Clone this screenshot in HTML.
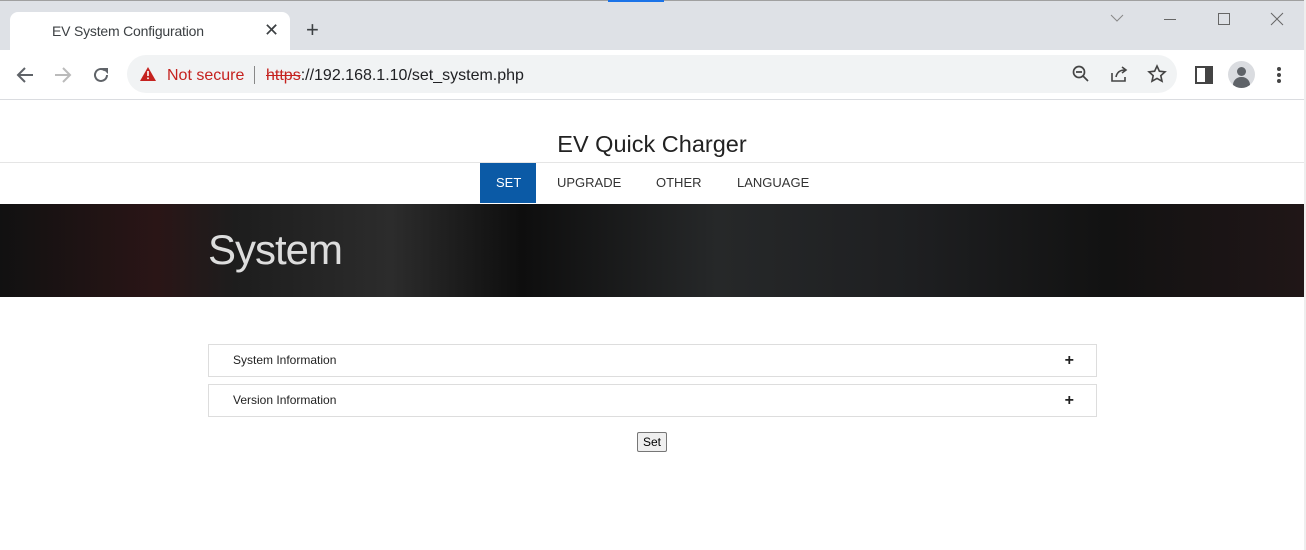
<!DOCTYPE html>
<html><head><style>
*{margin:0;padding:0;box-sizing:border-box}
body{width:1306px;height:550px;overflow:hidden;background:#fff;font-family:"Liberation Sans",sans-serif;position:relative}
.tabbar{position:absolute;left:0;top:0;width:1304px;height:50px;background:#dee1e6;border-top:1px solid #a0a0a0}
.tab{position:absolute;left:10px;top:11px;width:280px;height:40px;background:#fff;border-radius:8px 8px 0 0;font-size:14px;color:#3c4043}
.toolbar{position:absolute;left:0;top:50px;width:1304px;height:50px;background:#fff;border-bottom:1px solid #dadce0}
.omni{position:absolute;left:127px;top:5px;width:1050px;height:38px;background:#f1f3f4;border-radius:19px}
.abs{position:absolute}
.nav a{position:absolute;top:163px;height:40px;line-height:40px;font-size:13px;color:#333;text-decoration:none;padding:0 16px}
.acc{position:absolute;left:208px;width:889px;height:33px;border:1px solid #ddd;font-size:12px;color:#222;padding-left:24px;line-height:31px}
.acc b{position:absolute;right:22px;top:0;font-size:16px}
</style></head><body>
<div class="tabbar">
 <div class="abs" style="left:608px;top:-1px;width:56px;height:2px;background:#1a73e8"></div>
 <div class="tab"><span class="abs" style="left:42px;top:11px;letter-spacing:-0.2px">EV System Configuration</span><span class="abs" style="left:254px;top:8px;font-size:18px">✕</span></div>
 <span class="abs" style="left:306px;top:16px;font-size:22px;color:#3c4043">+</span>
 <svg class="abs" style="left:1110px;top:12px" width="14" height="10"><path d="M1 2l6 6 6-6" stroke="#888" fill="none"/></svg>
 <div class="abs" style="left:1164px;top:18px;width:12px;height:1px;background:#666"></div>
 <div class="abs" style="left:1218px;top:12px;width:12px;height:12px;border:1px solid #666"></div>
 <svg class="abs" style="left:1270px;top:11px" width="14" height="14"><path d="M1 1l12 12M13 1L1 13" stroke="#666"/></svg>
</div>
<div class="toolbar">
 <svg class="abs" style="left:16px;top:16px" width="18" height="18"><path d="M17 9H2M9 2L2 9l7 7" stroke="#5f6368" stroke-width="2" fill="none"/></svg>
 <svg class="abs" style="left:54px;top:16px" width="18" height="18"><path d="M1 9h15M9 2l7 7-7 7" stroke="#bbb" stroke-width="2" fill="none"/></svg>
 <svg class="abs" style="left:92px;top:16px" width="18" height="18"><path d="M15 9a6 6 0 1 1-2-4.5" stroke="#5f6368" stroke-width="2" fill="none"/><path d="M10 2h6v6z" fill="#5f6368"/></svg>
 <div class="omni">
  <svg class="abs" style="left:13px;top:12px" width="16" height="14"><path d="M8 0L16 14H0z" fill="#c5221f"/><rect x="7.2" y="4" width="1.6" height="5" fill="#fff"/><rect x="7.2" y="10.5" width="1.6" height="1.6" fill="#fff"/></svg>
  <span class="abs" style="left:40px;top:12px;font-size:16px;color:#c5221f">Not secure</span>
  <div class="abs" style="left:127px;top:11px;width:1px;height:18px;background:#888"></div>
  <span class="abs" style="left:139px;top:12px;font-size:16px;color:#202124"><span style="color:#c5221f;text-decoration:line-through">https</span>://192.168.1.10/set_system.php</span>
  <svg class="abs" style="left:945px;top:10px" width="18" height="18"><circle cx="7" cy="7" r="5.5" stroke="#444" stroke-width="1.7" fill="none"/><path d="M4 7h6M11 11l5 5" stroke="#444" stroke-width="1.7"/></svg>
  <svg class="abs" style="left:983px;top:10px" width="18" height="18"><path d="M2 8v8h13v-4M6 12c1-5 4-7 9-7M12 2l4 3-4 3" stroke="#444" stroke-width="1.6" fill="none"/></svg>
  <svg class="abs" style="left:1020px;top:9px" width="20" height="20"><path d="M10 2l2.4 5.2 5.6.6-4.2 3.8 1.2 5.6L10 14.4 5 17.2l1.2-5.6L2 7.8l5.6-.6z" stroke="#444" stroke-width="1.6" fill="none"/></svg>
 </div>
 <svg class="abs" style="left:1195px;top:16px" width="18" height="18"><rect x="1" y="1" width="16" height="16" stroke="#444" stroke-width="2" fill="none"/><rect x="10" y="1" width="7" height="16" fill="#444"/></svg>
 <div class="abs" style="left:1228px;top:11px;width:27px;height:27px;border-radius:50%;background:#dadce0;overflow:hidden"><div class="abs" style="left:9px;top:6px;width:9px;height:9px;border-radius:50%;background:#5f6368"></div><div class="abs" style="left:5px;top:16px;width:17px;height:12px;border-radius:8px 8px 0 0;background:#5f6368"></div></div>
 <div class="abs" style="left:1277px;top:17px;width:4px;height:4px;border-radius:50%;background:#444;box-shadow:0 6px 0 #444,0 12px 0 #444"></div>
</div>
<div class="abs" style="left:1304px;top:0;width:2px;height:550px;background:#eee"></div>
<div class="abs" style="left:0;top:131px;width:1304px;text-align:center;font-size:23.5px;color:#222">EV Quick Charger</div>
<div class="abs" style="left:0;top:162px;width:1304px;height:1px;background:#e5e5e5"></div>
<div class="nav">
 <a style="left:480px;width:56px;background:#0b5aa6;color:#fff">SET</a>
 <a style="left:541px">UPGRADE</a>
 <a style="left:640px">OTHER</a>
 <a style="left:721px">LANGUAGE</a>
</div>
<div class="abs" style="left:0;top:204px;width:1304px;height:93px;background:linear-gradient(90deg,#111 0%,#2a1516 12%,#1d1d1d 18%,#2c2c2c 30%,#0e0e0e 40%,#262829 55%,#1e1f21 70%,#121212 85%,#201617 100%)"></div>
<div class="abs" style="left:208px;top:226px;font-size:42px;color:#ddd;letter-spacing:-1px">System</div>
<div class="acc" style="top:344px">System Information<b>+</b></div>
<div class="acc" style="top:384px">Version Information<b>+</b></div>
<div class="abs" style="left:637px;top:432px;width:30px;height:20px;border:1px solid #767676;background:#efefef;border-radius:2px;font-size:12px;text-align:center;line-height:18px">Set</div>
</body></html>
